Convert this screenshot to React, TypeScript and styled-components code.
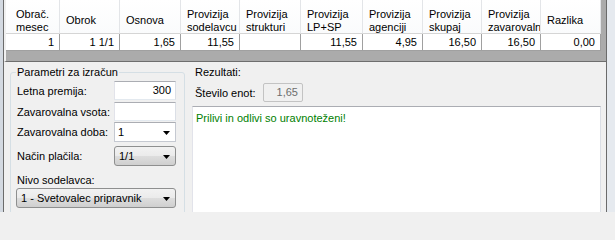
import React from 'react';
import styled, { createGlobalStyle } from 'styled-components';

const GlobalStyle = createGlobalStyle`
  html, body {
    margin: 0;
    padding: 0;
    background: #f0f0f0;
  }
  body {
    font-family: "Liberation Sans", Arial, sans-serif;
    font-size: 11px;
    color: #000;
  }
`;

interface GridColumn {
  title: string[];
  width: number;
  value: string;
  indent?: number;
}

const columns: GridColumn[] = [
  { title: ['Obrač.', 'mesec'], width: 54, value: '1', indent: 10 },
  { title: ['Obrok'], width: 60, value: '1 1/1' },
  { title: ['Osnova'], width: 61, value: '1,65' },
  { title: ['Provizija', 'sodelavcu'], width: 59, value: '11,55' },
  { title: ['Provizija', 'strukturi'], width: 61, value: '' },
  { title: ['Provizija', 'LP+SP'], width: 62, value: '11,55' },
  { title: ['Provizija', 'agenciji'], width: 60, value: '4,95' },
  { title: ['Provizija', 'skupaj'], width: 59, value: '16,50' },
  { title: ['Provizija', 'zavarovaln'], width: 59, value: '16,50' },
  { title: ['Razlika'], width: 60, value: '0,00' },
];

const Arrow = () => (
  <svg width="7" height="4" viewBox="0 0 7 4">
    <polygon points="0,0 7,0 3.5,4" fill="#000" />
  </svg>
);

export default function App() {
  return (
    <>
      <GlobalStyle />
      <Window>
        <LeftFrame />
        <Main>
          <GridArea>
            <Grid $cols={columns.map(c => `${c.width}px`).join(' ')}>
              {columns.map((c, i) => (
                <HeaderCell key={`h${i}`} $indent={c.indent || 6}>
                  <span>
                    {c.title.map((t, j) => (
                      <React.Fragment key={j}>
                        {j > 0 && <br />}
                        {t}
                      </React.Fragment>
                    ))}
                  </span>
                </HeaderCell>
              ))}
              {columns.map((c, i) => (
                <DataCell key={`d${i}`}>{c.value}</DataCell>
              ))}
            </Grid>
          </GridArea>

          <Panel>
            <GroupBox>
              <Legend>Parametri za izračun</Legend>
              <FieldRow>
                <FieldLabel>Letna premija:</FieldLabel>
                <TextBox $align="right">300</TextBox>
              </FieldRow>
              <FieldRow $mt={2}>
                <FieldLabel>Zavarovalna vsota:</FieldLabel>
                <TextBox />
              </FieldRow>
              <FieldRow $mt={1}>
                <FieldLabel>Zavarovalna doba:</FieldLabel>
                <Combo $editable>
                  <span>1</span>
                  <Arrow />
                </Combo>
              </FieldRow>
              <FieldRow $mt={4}>
                <FieldLabel>Način plačila:</FieldLabel>
                <Combo>
                  <span>1/1</span>
                  <Arrow />
                </Combo>
              </FieldRow>
              <BlockLabel>Nivo sodelavca:</BlockLabel>
              <Combo $wide>
                <span>1 - Svetovalec pripravnik</span>
                <Arrow />
              </Combo>
            </GroupBox>

            <Results>
              <ResultsTitle>Rezultati:</ResultsTitle>
              <UnitsRow>
                <UnitsLabel>Število enot:</UnitsLabel>
                <ReadOnlyBox>1,65</ReadOnlyBox>
              </UnitsRow>
              <MessageBox>Prilivi in odlivi so uravnoteženi!</MessageBox>
            </Results>
          </Panel>
        </Main>
        <RightFrame />
      </Window>
    </>
  );
}

const Window = styled.div`
  display: flex;
  width: 615px;
  height: 212px;
  overflow: hidden;
`;

const LeftFrame = styled.div`
  width: 3px;
  background: #d3d9e1;
  border-right: 1px solid #6b6b6b;
  flex: 0 0 auto;
`;

const RightFrame = styled.div`
  width: 8px;
  flex: 0 0 auto;
  background: #e6eaef;
  border-left: 1px solid #6b6b6b;
`;

const Main = styled.div`
  flex: 1;
  display: flex;
  flex-direction: column;
  background: #f0f0f0;
  min-width: 0;
`;

const GridArea = styled.div`
  height: 61px;
  flex: 0 0 auto;
  background: #ababab;
  border-left: 2px solid #f0f0f0;
  border-bottom: 1px solid #6e6e6e;
`;

interface GridProps {
  $cols: string;
}

const Grid = styled.div<GridProps>`
  display: grid;
  grid-template-columns: ${props => props.$cols};
  grid-template-rows: 34px 17px;
  width: max-content;
`;

interface HeaderCellProps {
  $indent: number;
}

const HeaderCell = styled.div<HeaderCellProps>`
  background: linear-gradient(#ffffff, #fafbfc);
  border-right: 1px solid #e3e5e8;
  border-bottom: 1px solid #d5d5d5;
  padding: 8px 0 0 ${props => props.$indent}px;
  display: flex;
  align-items: center;
  line-height: 13px;
  white-space: nowrap;
  overflow: hidden;
`;

const DataCell = styled.div`
  background: #fff;
  border-right: 1px solid #a0a0a0;
  border-bottom: 1px solid #a0a0a0;
  text-align: right;
  padding-right: 5px;
  line-height: 17px;
  white-space: nowrap;
`;

const Panel = styled.div`
  flex: 1;
  display: flex;
  gap: 7px;
  padding: 4px 5px 0 6px;
  min-height: 0;
`;

const GroupBox = styled.fieldset`
  margin: 0;
  width: 175px;
  box-sizing: border-box;
  border: 1px solid #d5dfe5;
  border-radius: 3px;
  padding: 2px 8px 0 6px;
  min-width: 0;
  height: 180px;
`;

const Legend = styled.legend`
  padding: 0 1px;
  margin-left: -1px;
  line-height: 13px;
  white-space: nowrap;
`;

interface FieldRowProps {
  $mt?: number;
}

const FieldRow = styled.div<FieldRowProps>`
  display: grid;
  grid-template-columns: 97px 62px;
  align-items: center;
  margin-top: ${props => props.$mt || 0}px;
`;

const FieldLabel = styled.span`
  line-height: 13px;
  white-space: nowrap;
  padding-top: 1px;
`;

const BlockLabel = styled.div`
  margin-top: 8px;
  line-height: 13px;
`;

interface TextBoxProps {
  $align?: 'left' | 'right';
}

const TextBox = styled.div<TextBoxProps>`
  height: 19px;
  box-sizing: border-box;
  background: #fff;
  border: 1px solid;
  border-color: #abadb3 #dbdfe6 #e3e9ef #e2e3ea;
  text-align: ${props => props.$align || 'left'};
  padding: 0 4px;
  line-height: 17px;
`;

interface ComboProps {
  $editable?: boolean;
  $wide?: boolean;
}

const Combo = styled.div<ComboProps>`
  height: 20px;
  box-sizing: border-box;
  display: flex;
  align-items: center;
  justify-content: space-between;
  margin-top: ${props => (props.$wide ? '1px' : '0')};
  width: ${props => (props.$wide ? '160px' : 'auto')};
  margin-left: ${props => (props.$wide ? '-1px' : '0')};
  padding: 0 5px 0 ${props => (props.$editable ? '3px' : '4px')};
  border: 1px solid ${props => (props.$editable ? '#c5c9d1' : '#8e8f8f')};
  border-top-color: ${props => (props.$editable ? '#abadb3' : '#8e8f8f')};
  border-radius: ${props => (props.$editable ? '0' : '3px')};
  background: ${props =>
    props.$editable
      ? '#fff'
      : 'linear-gradient(#f2f2f2 0%, #ebebeb 48%, #dddddd 52%, #cfcfcf 100%)'};
  line-height: 13px;
  white-space: nowrap;

  svg {
    flex: 0 0 auto;
    margin-top: 1px;
  }
`;

const Results = styled.div`
  flex: 1;
  display: flex;
  flex-direction: column;
  min-width: 0;
`;

const ResultsTitle = styled.div`
  line-height: 13px;
  padding-left: 3px;
`;

const UnitsRow = styled.div`
  display: grid;
  grid-template-columns: 68px 40px;
  align-items: center;
  padding-left: 3px;
  margin-top: 4px;
`;

const UnitsLabel = styled.span`
  line-height: 13px;
  padding-top: 1px;
`;

const ReadOnlyBox = styled.div`
  height: 19px;
  box-sizing: border-box;
  background: #f0f0f0;
  border: 1px solid #c3c3c3;
  border-radius: 2px;
  color: #6d6d6d;
  text-align: right;
  padding-right: 4px;
  line-height: 17px;
`;

const MessageBox = styled.div`
  margin-top: 4px;
  flex: 1;
  background: #fff;
  border: 1px solid;
  border-color: #abadb3 #dbdfe6 #e3e9ef #e2e3ea;
  color: #008000;
  padding: 5px 3px;
  line-height: 13px;
  min-height: 120px;
`;
